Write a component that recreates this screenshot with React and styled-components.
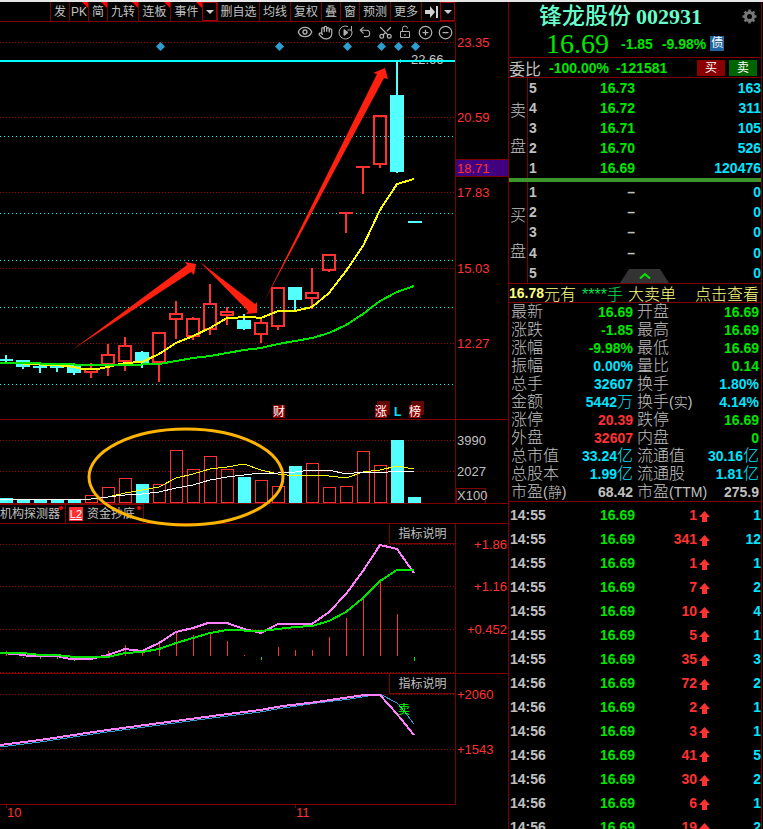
import React from 'react';
import styled, { createGlobalStyle } from 'styled-components';
import { Eye, Hand, Undo2, Scissors, LockOpen, CirclePlus, CircleMinus } from 'lucide-react';

const RED = '#ff3232';
const LINE = '#800000';
const CYAN = '#54ffff';
const GREEN = '#00e600';
const AQUA = '#00e4ff';
const GRAY = '#c0c0c0';
const YELLOW = '#ffff00';
const PINK = '#ff80ff';

const GlobalStyle = createGlobalStyle`
  * { box-sizing: border-box; }
  body {
    margin: 0;
    background: #000;
    color: ${GRAY};
    font-family: "Liberation Sans", "Noto Sans CJK SC", sans-serif;
  }
  button {
    font: inherit;
    color: inherit;
    background: none;
    border: 0;
    padding: 0;
    cursor: pointer;
  }
`
const Page = styled.div`
  display: grid;
  grid-template-columns: minmax(0, 1fr) 255px;
  height: 100vh;
  overflow: hidden;
  border-top: 2px solid #e6e6e6;
`

/* left side */
const Charts = styled.main`
  min-width: 0;
`
const Toolbar = styled.nav`
  display: flex;
  justify-content: flex-end;
  height: 20px;
  margin-right: 53px;
  border-bottom: 1px solid ${LINE};
`
const ToolButton = styled.button`
  position: relative;
  display: flex;
  align-items: center;
  justify-content: center;
  flex: none;
  width: ${p => p.$w}px;
  border-left: 1px solid ${LINE};
  font-size: 12px;
  line-height: 18px;
  ${p => p.$flag && `
    &::after {
      content: '';
      position: absolute;
      top: 0;
      right: 0;
      border-top: 6px solid #ff0000;
      border-left: 6px solid transparent;
    }
  `}
`
const DropButton = styled(ToolButton)`
  border: 1px solid #a00000;
`
const IconRow = styled.div`
  display: flex;
  justify-content: flex-end;
  height: 19px;
  margin-right: 52px;
  border-right: 1px solid ${LINE};
`
const IconButton = styled.button`
  display: grid;
  place-items: center;
  width: 20px;
  height: 20px;
  color: #b0b0b0;
`
const CutIcon = styled(Scissors)`
  transform: rotate(-90deg);
`
const Pane = styled.section`
  position: relative;
`
const Plot = styled.svg`
  position: relative;
  z-index: ${p => (p.$above ? 1 : 0)};
  display: block;
  width: 100%;
  height: auto;
  overflow: visible;
  pointer-events: none;
  font-family: "Liberation Sans", "Noto Sans CJK SC", sans-serif;
  font-size: 13px;
`
const HelpButton = styled.button`
  position: absolute;
  z-index: 1;
  top: 0;
  right: 52px;
  width: 67px;
  height: 20px;
  border: 1px solid ${LINE};
  border-top: 0;
  background: #000;
  font-size: 12px;
  line-height: 20px;
`
const Tabs = styled.div`
  display: flex;
  height: 20px;
  border-bottom: 1px solid ${LINE};
`
const Tab = styled.button`
  position: relative;
  display: flex;
  align-items: center;
  justify-content: center;
  gap: 4px;
  width: ${p => p.$w}px;
  padding-right: 5px;
  border-top: 1px solid ${LINE};
  border-right: 1px solid ${LINE};
  font-size: 12px;
  line-height: 20px;
  white-space: nowrap;
  &::after {
    content: '';
    position: absolute;
    top: 1px;
    right: 2px;
    width: 4px;
    height: 4px;
    border-radius: 50%;
    background: #ff0000;
  }
`
const Level2 = styled.span`
  width: 14px;
  height: 14px;
  background: #ff3030;
  color: #fff;
  font-size: 11px;
  line-height: 14px;
  text-align: center;
  text-decoration: underline;
`

/* right side */
const Quote = styled.aside`
  display: flex;
  flex-direction: column;
  min-width: 0;
  margin-right: 1px;
  border-left: 1px solid ${LINE};
  border-right: 1px solid ${LINE};
  font-size: 16px;
  overflow: hidden;
`
const Row = styled.div`
  display: flex;
  align-items: center;
  flex: none;
  height: ${p => p.$h}px;
  border-bottom: ${p => (p.$line ? `1px solid ${LINE}` : '0')};
`
const Title = styled.h1`
  flex: 1;
  margin: 0;
  padding-left: 30px;
  color: #66ffcc;
  font-size: 23px;
  font-weight: 500;
  line-height: 27px;
  white-space: nowrap;
`
const Code = styled.span`
  margin-left: 5px;
  font-family: "Liberation Serif", serif;
  font-size: 22px;
  font-weight: bold;
`
const GearButton = styled.button`
  display: grid;
  margin-right: 4px;
`
const Price = styled.strong`
  padding-left: 37px;
  color: ${GREEN};
  font-family: "Liberation Serif", serif;
  font-size: 28px;
  font-weight: normal;
  line-height: 28px;
`
const Num = styled.span`
  color: ${p => p.$c || GREEN};
  font-size: 14px;
  font-weight: bold;
  margin-left: ${p => p.$gap || 0}px;
`
const Bond = styled.span`
  width: 14px;
  height: 15px;
  margin-left: 4px;
  background: #2264a0;
  color: #fff;
  font-size: 12px;
  line-height: 15px;
  text-align: center;
`
const TradeButtons = styled.div`
  display: flex;
  gap: 4px;
  margin: 0 4px 0 auto;
`
const TradeButton = styled.button`
  width: 28px;
  height: 16px;
  background: ${p => p.$bg};
  color: #fff;
  font-size: 12px;
  line-height: 16px;
`
const Book = styled.div`
  position: relative;
  display: flex;
  flex: none;
  height: ${p => p.$h}px;
  border-bottom: ${p => (p.$buy ? `1px solid ${LINE}` : '4px solid #3c962c')};
`
const Side = styled.div`
  display: flex;
  flex-direction: column;
  justify-content: center;
  align-items: center;
  gap: 12px;
  width: 19px;
  padding-top: 2px;
  border-right: 1px solid ${LINE};
  font-weight: 300;
  line-height: 24px;
`
const Levels = styled.table`
  flex: 1;
  border-collapse: collapse;
  font-size: 14px;
  font-weight: bold;
  td { height: 20px; padding: 0; line-height: 20px; }
  td:first-child { width: 20px; padding-left: 1px; }
  td:nth-child(2) { width: 87px; color: ${p => (p.$buy ? GRAY : GREEN)}; text-align: right; }
  td:last-child { color: ${AQUA}; text-align: right; }
`
const Expand = styled.button`
  position: absolute;
  left: 111px;
  bottom: 0;
  display: grid;
  place-items: center;
  width: 49px;
  height: 14px;
  background: #333;
  clip-path: polygon(9px 0, 40px 0, 100% 100%, 0 100%);
`
const Notice = styled(Row)`
  color: #ffff80;
  font-weight: 300;
  white-space: nowrap;
`
const Lots = styled.span`
  margin: 0 5px 0 6px;
  color: #00e050;
`
const Detail = styled.a`
  margin-left: auto;
  padding-right: 2px;
  color: inherit;
  text-decoration: none;
`
const Stats = styled.dl`
  display: grid;
  grid-template-columns: 1fr 1fr;
  flex: none;
  margin: 0;
  border-bottom: 1px solid ${LINE};
`
const Stat = styled.div`
  display: flex;
  align-items: center;
  justify-content: space-between;
  height: 18px;
  padding: 0 2px;
  line-height: 20px;
  white-space: nowrap;
  dt { font-weight: 300; }
  dd {
    margin: 0;
    color: ${p => p.$c};
    font-size: 14px;
    font-weight: bold;
  }
`
const Small = styled.span`
  font-size: 14px;
`
const Unit = styled.span`
  font-size: 16px;
  font-weight: 300;
`
const Ticks = styled.table`
  width: 100%;
  margin-top: 1px;
  border-collapse: collapse;
  font-size: 14px;
  font-weight: bold;
  td { height: 24px; padding: 0; text-align: right; }
  td:first-child { width: 38px; text-align: left; padding-left: 1px; }
  td:nth-child(2) { width: 88px; color: ${GREEN}; }
  td:nth-child(3) { width: 62px; color: ${RED}; }
  td:nth-child(4) { width: 15px; }
  td:last-child { color: ${AQUA}; }
  svg { display: block; margin: 2px 0 0 2px; }
`

const tools = [
  ['发', 19], ['PK', 19, true], ['简', 19, true], ['九转', 31, true], ['连板', 32, true],
  ['事件', 32, true], ['▾', 15], ['删自选', 42], ['均线', 31], ['复权', 31], ['叠', 19],
  ['窗', 19], ['预测', 31], ['更多', 31], ['end', 19], ['▾', 15],
]

// 17px between candles, first one centred on 6
const cx = i => 6 + i * 17

// [up, body top, body bottom, high, low]
const candles = [
  [0, 359, 361, 355, 362], [0, 360, 367, 360, 369], [0, 366, 368, 365, 373], [0, 366, 368, 366, 372],
  [0, 365, 373, 365, 375], [1, 368, 373, 363, 378], [1, 354, 365, 344, 376], [1, 345, 362, 337, 371],
  [0, 352, 363, 351, 368], [1, 332, 363, 332, 382], [1, 313, 320, 301, 339], [1, 318, 337, 317, 340],
  [1, 303, 330, 284, 335], [1, 311, 316, 307, 325], [0, 320, 329, 314, 330], [1, 322, 335, 318, 343],
  [1, 287, 327, 287, 330], [0, 287, 300, 287, 311], [1, 292, 299, 268, 309], [1, 254, 271, 254, 272],
  [1, 212, 214, 212, 233], [1, 166, 168, 166, 194], [1, 115, 165, 115, 168], [0, 95, 172, 61, 173],
  [0, 221, 223, 221, 223],
]
const volumes = [
  498, 500, 500, 500, 500, 495, 487, 478, 484, 484, 450, 469, 456, 469, 477, 480, 486, 466, 463,
  487, 486, 451, 465, 440, 497,
]
// [x, top, bottom]
const macdBars = [
  [6, 651, 656], [108, 651, 656], [125, 645, 656], [142, 652, 656], [159, 644, 656], [176, 632, 656],
  [193, 635, 656], [210, 633, 656], [227, 641, 656], [244, 655, 656], [278, 647, 656], [295, 650, 656],
  [312, 650, 656], [329, 637, 656], [346, 618, 656], [363, 599, 656], [380, 581, 656], [397, 614, 656],
]
const macdDown = [[23, 657, 658], [40, 657, 659], [57, 657, 659], [74, 657, 661], [261, 657, 660], [414, 657, 661]]

const sells = [['5', '16.73', '163'], ['4', '16.72', '311'], ['3', '16.71', '105'], ['2', '16.70', '526'], ['1', '16.69', '120476']]
const buys = [['1', '–', '0'], ['2', '–', '0'], ['3', '–', '0'], ['4', '–', '0'], ['5', '', '0']]

const stats = [
  ['最新', '', '16.69', '', GREEN], ['开盘', '', '16.69', '', GREEN],
  ['涨跌', '', '-1.85', '', GREEN], ['最高', '', '16.69', '', GREEN],
  ['涨幅', '', '-9.98%', '', GREEN], ['最低', '', '16.69', '', GREEN],
  ['振幅', '', '0.00%', '', AQUA], ['量比', '', '0.14', '', GREEN],
  ['总手', '', '32607', '', AQUA], ['换手', '', '1.80%', '', AQUA],
  ['金额', '', '5442', '万', AQUA], ['换手', '(实)', '4.14%', '', AQUA],
  ['涨停', '', '20.39', '', RED], ['跌停', '', '16.69', '', GREEN],
  ['外盘', '', '32607', '', RED], ['内盘', '', '0', '', GREEN],
  ['总市值', '', '33.24', '亿', AQUA], ['流通值', '', '30.16', '亿', AQUA],
  ['总股本', '', '1.99', '亿', AQUA], ['流通股', '', '1.81', '亿', AQUA],
  ['市盈', '(静)', '68.42', '', GRAY], ['市盈', '(TTM)', '275.9', '', GRAY],
]
const ticks = [
  ['14:55', 1, 1], ['14:55', 341, 12], ['14:55', 1, 1], ['14:55', 7, 2], ['14:55', 10, 4],
  ['14:55', 5, 1], ['14:55', 35, 3], ['14:56', 72, 2], ['14:56', 2, 1], ['14:56', 3, 1],
  ['14:56', 41, 5], ['14:56', 30, 2], ['14:56', 6, 1], ['14:56', 19, 2],
]

const Caret = () => (
  <svg width="8" height="4"><path d="M0 0h8L4 4z" fill="#d0d0d0" /></svg>
)

const Dots = ({ y, color = '#a00000', gap = 2 }) => (
  <line x1="0" x2="455" y1={y + 0.5} y2={y + 0.5} stroke={color} strokeDasharray={`1 ${gap}`} shapeRendering="crispEdges" />
)

const Curve = ({ points, color, width = 2 }) => (
  <polyline points={points} fill="none" stroke={color} strokeWidth={width} shapeRendering="crispEdges" />
)

const Label = ({ y, x = 457, color = RED, end, children }) => (
  <text x={x} y={y + 5} fill={color} textAnchor={end ? 'end' : 'start'}>{children}</text>
)

const Frame = ({ top, bottom, right = 508 }) => (
  <path
    d={`M455.5 ${top}V${bottom}M0 ${bottom + 0.5}H${right}`}
    stroke={LINE}
    fill="none"
    shapeRendering="crispEdges"
  />
)

const Marker = ({ x, shadow, children }) => (
  <g>
    {shadow && <rect x={x + 2} y="401" width="13" height="14" fill="#600808" />}
    <rect x={x} y="405" width="12" height="13" fill="#8b0000" />
    <text x={x} y="416" fill="#fff" fontSize="12">{children}</text>
  </g>
)

const Candle = ({ x, data }) => {
  const [up, top, bottom, high, low] = data
  const color = up ? RED : CYAN
  if (!up || bottom - top < 3) {
    return (
      <g fill={color}>
        <rect x={x - 1} y={high} width="2" height={low - high} />
        <rect x={x - 7} y={top} width="14" height={bottom - top} />
      </g>
    )
  }
  return (
    <g fill={color}>
      <rect x={x - 1} y={high} width="2" height={top - high} />
      <rect x={x - 1} y={bottom} width="2" height={low - bottom} />
      <rect x={x - 6} y={top + 1} width="12" height={bottom - top - 2} fill="none" stroke={color} strokeWidth="2" />
    </g>
  )
}

const PricePane = () => (
  <Pane>
    <Plot viewBox="0 41 508 379">
      {[42, 117, 192, 268, 343].map(y => <Dots key={y} y={y} />)}
      {[136, 213, 260, 307, 384].map(y => <Dots key={y} y={y} color="#00ffff" gap={3} />)}
      <Frame top={41} bottom={419} />
      <text x="411" y="64" fill="#c8c8c8">22.66</text>
      <path d="M398 61l3-2v4z" fill="#c8c8c8" />
      <rect x="0" y="60" width="455" height="2" fill="#00ffff" />
      {[160, 279, 347, 381, 398, 415].map(x => (
        <path key={x} d={`M${x + 0.5} 42l4.5 4.5-4.5 4.5-4.5-4.5z`} fill="#2c9fd0" />
      ))}
      {candles.map((c, i) => <Candle key={i} x={i === 24 ? 415 : cx(i)} data={c} />)}
      <Curve color={YELLOW} points="23,364 57,365 74,367 82,369 97,369 108,367 125,363 142,362 159,354 176,343 193,336 210,328 227,318 250,317 261,318 278,311 295,311 312,307 329,293 346,271 363,246 380,210 397,184 414,179" />
      <Curve color={GREEN} points="0,363 40,363 41,364 74,364 75,365 125,365 159,364 176,361 193,358 210,356 227,353 244,350 261,348 278,344 295,341 312,338 329,333 346,325 363,314 380,301 397,292 414,286" />
      <g fill="#ff2010">
        <path d="M72 350L187 265 185 262 196 264 194 275 191 272z" />
        <path d="M200 262L255 304 257 302V313L246 314 248 311z" />
        <path d="M264 302L377 74 373 73 385 68 388 79 384 78z" />
      </g>
      <rect x="456" y="159" width="52" height="17" fill="#400080" />
      <path d="M456 159.500H508M456 176.500H508" stroke={LINE} />
      <Label y={42}>23.35</Label>
      <Label y={117}>20.59</Label>
      <Label y={168}>18.71</Label>
      <Label y={192}>17.83</Label>
      <Label y={268}>15.03</Label>
      <Label y={343}>12.27</Label>
      <Marker x={273}>财</Marker>
      <Marker x={375} shadow>涨</Marker>
      <text x="394" y="416" fill="#00e4ff" fontWeight="bold" fontSize="12">L</text>
      <Marker x={409} shadow>榜</Marker>
    </Plot>
  </Pane>
)

const VolumePane = () => (
  <Pane>
    <Plot viewBox="0 420 508 84" $above>
      <Dots y={440} />
      <Dots y={471} />
      <g shapeRendering="crispEdges">
        {volumes.map((top, i) => (candles[i][0]
          ? <rect key={i} x={cx(i) - 5.5} y={top + 0.5} width="12" height={502 - top} fill="none" stroke={RED} />
          : <rect key={i} x={cx(i) - 6} y={top} width="13" height={503 - top} fill={CYAN} />
        ))}
      </g>
      <Curve width={1} color={YELLOW} points="0,499 91,499 108,497 125,493 142,490 159,487 176,478 193,474 210,469 227,467 244,464 261,470 278,474 295,476 312,475 329,476 346,478 363,472 380,470 397,466 414,469" />
      <Curve width={1} color="#fff" points="0,500 91,499 108,497 125,495 142,494 159,492 176,488 193,485 210,480 227,477 244,475 261,473 278,473 295,472 312,470 329,470 346,474 363,472 380,473 397,471 414,472" />
      <Frame top={420} bottom={503} />
      <rect x="456.500" y="488.500" width="29" height="15" fill="none" stroke={LINE} />
      <Label y={440} color={GRAY}>3990</Label>
      <Label y={471} color={GRAY}>2027</Label>
      <Label y={495} color={GRAY}>X100</Label>
      <ellipse cx="186" cy="477" rx="97" ry="48" fill="none" stroke="#ffb400" strokeWidth="3" />
    </Plot>
  </Pane>
)

const MacdPane = () => (
  <Pane>
    <Plot viewBox="0 524 508 150">
      {[544, 586, 629, 672].map(y => <Dots key={y} y={y} />)}
      <Frame top={524} bottom={673} />
      <g shapeRendering="crispEdges">
        {macdBars.map(([x, t, b]) => <rect key={x} x={x} y={t} width="1" height={b - t} fill={RED} />)}
        {macdDown.map(([x, t, b]) => <rect key={x} x={x} y={t} width="1" height={b - t} fill={GREEN} />)}
      </g>
      <Curve color={PINK} points="0,653 15,654 30,656 57,656 70,659 91,659 108,655 125,649 142,651 159,643 176,632 193,628 208,623 227,623 244,629 261,633 278,624 312,624 329,612 346,594 363,571 380,545 397,549 414,573" />
      <Curve color={GREEN} points="0,653 23,653 40,655 57,655 74,657 108,657 125,653 142,652 159,649 176,643 193,638 210,633 227,630 261,631 278,629 295,627 312,626 329,621 346,612 363,598 380,581 397,570 414,570" />
      <Label x={507} y={544} end>+1.86</Label>
      <Label x={507} y={586} end>+1.16</Label>
      <Label x={507} y={629} end>+0.452</Label>
    </Plot>
    <HelpButton>指标说明</HelpButton>
  </Pane>
)

const TrendPane = () => (
  <Pane>
    <Plot viewBox="0 674 508 155">
      <Dots y={694} />
      <Dots y={749} />
      <Frame top={674} bottom={804} right={456} />
      <path d="M6.500 804v4M295.500 804v4" stroke={LINE} />
      <Curve width={1} color="#2c9fd0" points="0,747 40,742 100,733 160,725 220,717 260,712 283,708 317,703 350,699 380,694 397,703 405,712 414,724" />
      <Curve color={PINK} points="0,745 40,740 100,731 160,723 220,715 260,710 283,706 317,702 350,697 365,695 380,695 397,714 414,735" />
      <text x="398" y="714" fill="#00ff00" fontSize="12">卖</text>
      <Label y={694}>+2060</Label>
      <Label y={749}>+1543</Label>
      <Label x={7} y={812}>10</Label>
      <Label x={296} y={812}>11</Label>
    </Plot>
    <HelpButton>指标说明</HelpButton>
  </Pane>
)

const PriceLevels = ({ rows, buy }) => (
  <Levels $buy={buy}>
    <tbody>
      {rows.map(r => (
        <tr key={r[0]}><td>{r[0]}</td><td>{r[1]}</td><td>{r[2]}</td></tr>
      ))}
    </tbody>
  </Levels>
)

const App = () => {
  return (
    <>
      <GlobalStyle />
      <Page>
        <Charts>
          <Toolbar>
            {tools.map(([name, w, flag], i) => {
              if (name === '▾') return <DropButton key={i} $w={w} aria-label="展开"><Caret /></DropButton>
              if (name === 'end') {
                return (
                  <ToolButton key={i} $w={w} aria-label="隐藏">
                    <svg width="13" height="12"><path d="M0 4h5V0l5 6-5 6V8H0zM11 0h2v12h-2z" fill="#d0d0d0" /></svg>
                  </ToolButton>
                )
              }
              return <ToolButton key={i} $w={w} $flag={flag}>{name}</ToolButton>
            })}
          </Toolbar>
          <IconRow>
            <IconButton aria-label="显示"><Eye size={16} strokeWidth={2} /></IconButton>
            <IconButton aria-label="拖动"><Hand size={15} strokeWidth={2} /></IconButton>
            <IconButton aria-label="回放">
              <svg width="15" height="15" viewBox="0 0 15 15" fill="none" stroke="currentColor">
                <path d="M10 1.500A6.500 6.500 0 1 0 13.500 5M13.500 1v4h-4" />
                <path d="M6 4.500v6l4-3z" fill="currentColor" />
              </svg>
            </IconButton>
            <IconButton aria-label="撤销"><Undo2 size={14} strokeWidth={2} /></IconButton>
            <IconButton aria-label="剪切"><CutIcon size={15} strokeWidth={2} /></IconButton>
            <IconButton aria-label="锁定">
              <svg width="12" height="14" viewBox="0 0 12 14" fill="none" stroke="currentColor">
                <path d="M1.500 6.500h9v6h-9zM3.500 6.500V3.500a2.500 2.500 0 0 1 5 0M6 9v2" />
              </svg>
            </IconButton>
            <IconButton aria-label="放大"><CirclePlus size={15} strokeWidth={2} /></IconButton>
            <IconButton aria-label="缩小"><CircleMinus size={15} strokeWidth={2} /></IconButton>
          </IconRow>
          <PricePane />
          <VolumePane />
          <Tabs>
            <Tab $w={66}>机构探测器</Tab>
            <Tab $w={78}><Level2>L2</Level2>资金抄底</Tab>
          </Tabs>
          <MacdPane />
          <TrendPane />
        </Charts>

        <Quote>
          <Row $h={28}>
            <Title>锋龙股份<Code>002931</Code></Title>
            <GearButton aria-label="设置">
              <svg width="15" height="15" viewBox="-7.500 -7.500 15 15" fill="none" stroke="#777">
                <circle r="4" strokeWidth="3" />
                {[0, 45, 90, 135, 180, 225, 270, 315].map(a => (
                  <path key={a} d="M0 -4V-7" strokeWidth="2.500" transform={`rotate(${a})`} />
                ))}
              </svg>
            </GearButton>
          </Row>
          <Row $h={28} $line>
            <Price>16.69</Price>
            <Num $gap={12}>-1.85</Num>
            <Num $gap={9}>-9.98%</Num>
            <Bond>债</Bond>
          </Row>
          <Row $h={20} $line>
            <span>委比</span>
            <Num $gap={8}>-100.00%</Num>
            <Num $gap={7}>-121581</Num>
            <TradeButtons>
              <TradeButton $bg="#8b0000">买</TradeButton>
              <TradeButton $bg="#006400">卖</TradeButton>
            </TradeButtons>
          </Row>
          <Book $h={104}>
            <Side><span>卖</span><span>盘</span></Side>
            <PriceLevels rows={sells} />
          </Book>
          <Book $h={102} $buy>
            <Side><span>买</span><span>盘</span></Side>
            <PriceLevels rows={buys} buy />
            <Expand aria-label="收起">
              <svg width="12" height="6"><path d="M1 5.500L6 1l5 4.500" fill="none" stroke={GREEN} strokeWidth="2" /></svg>
            </Expand>
          </Book>
          <Notice $h={19} $line>
            <Num $c="#ffff80">16.78</Num>元有
            <Lots>****手</Lots>
            大卖单
            <Detail href="#detail">点击查看</Detail>
          </Notice>
          <Stats>
            {stats.map(([name, note, value, unit, color], i) => (
              <Stat key={i} $c={color}>
                <dt>{name}{note && <Small>{note}</Small>}</dt>
                <dd>{value}{unit && <Unit>{unit}</Unit>}</dd>
              </Stat>
            ))}
          </Stats>
          <Ticks>
            <tbody>
              {ticks.map(([time, vol, count], i) => (
                <tr key={i}>
                  <td>{time}</td>
                  <td>16.69</td>
                  <td>{vol}</td>
                  <td><svg width="11" height="11"><path d="M5.500 0L11 6H8v5H3V6H0z" fill={RED} /></svg></td>
                  <td>{count}</td>
                </tr>
              ))}
            </tbody>
          </Ticks>
        </Quote>
      </Page>
    </>
  )
}

export default App
